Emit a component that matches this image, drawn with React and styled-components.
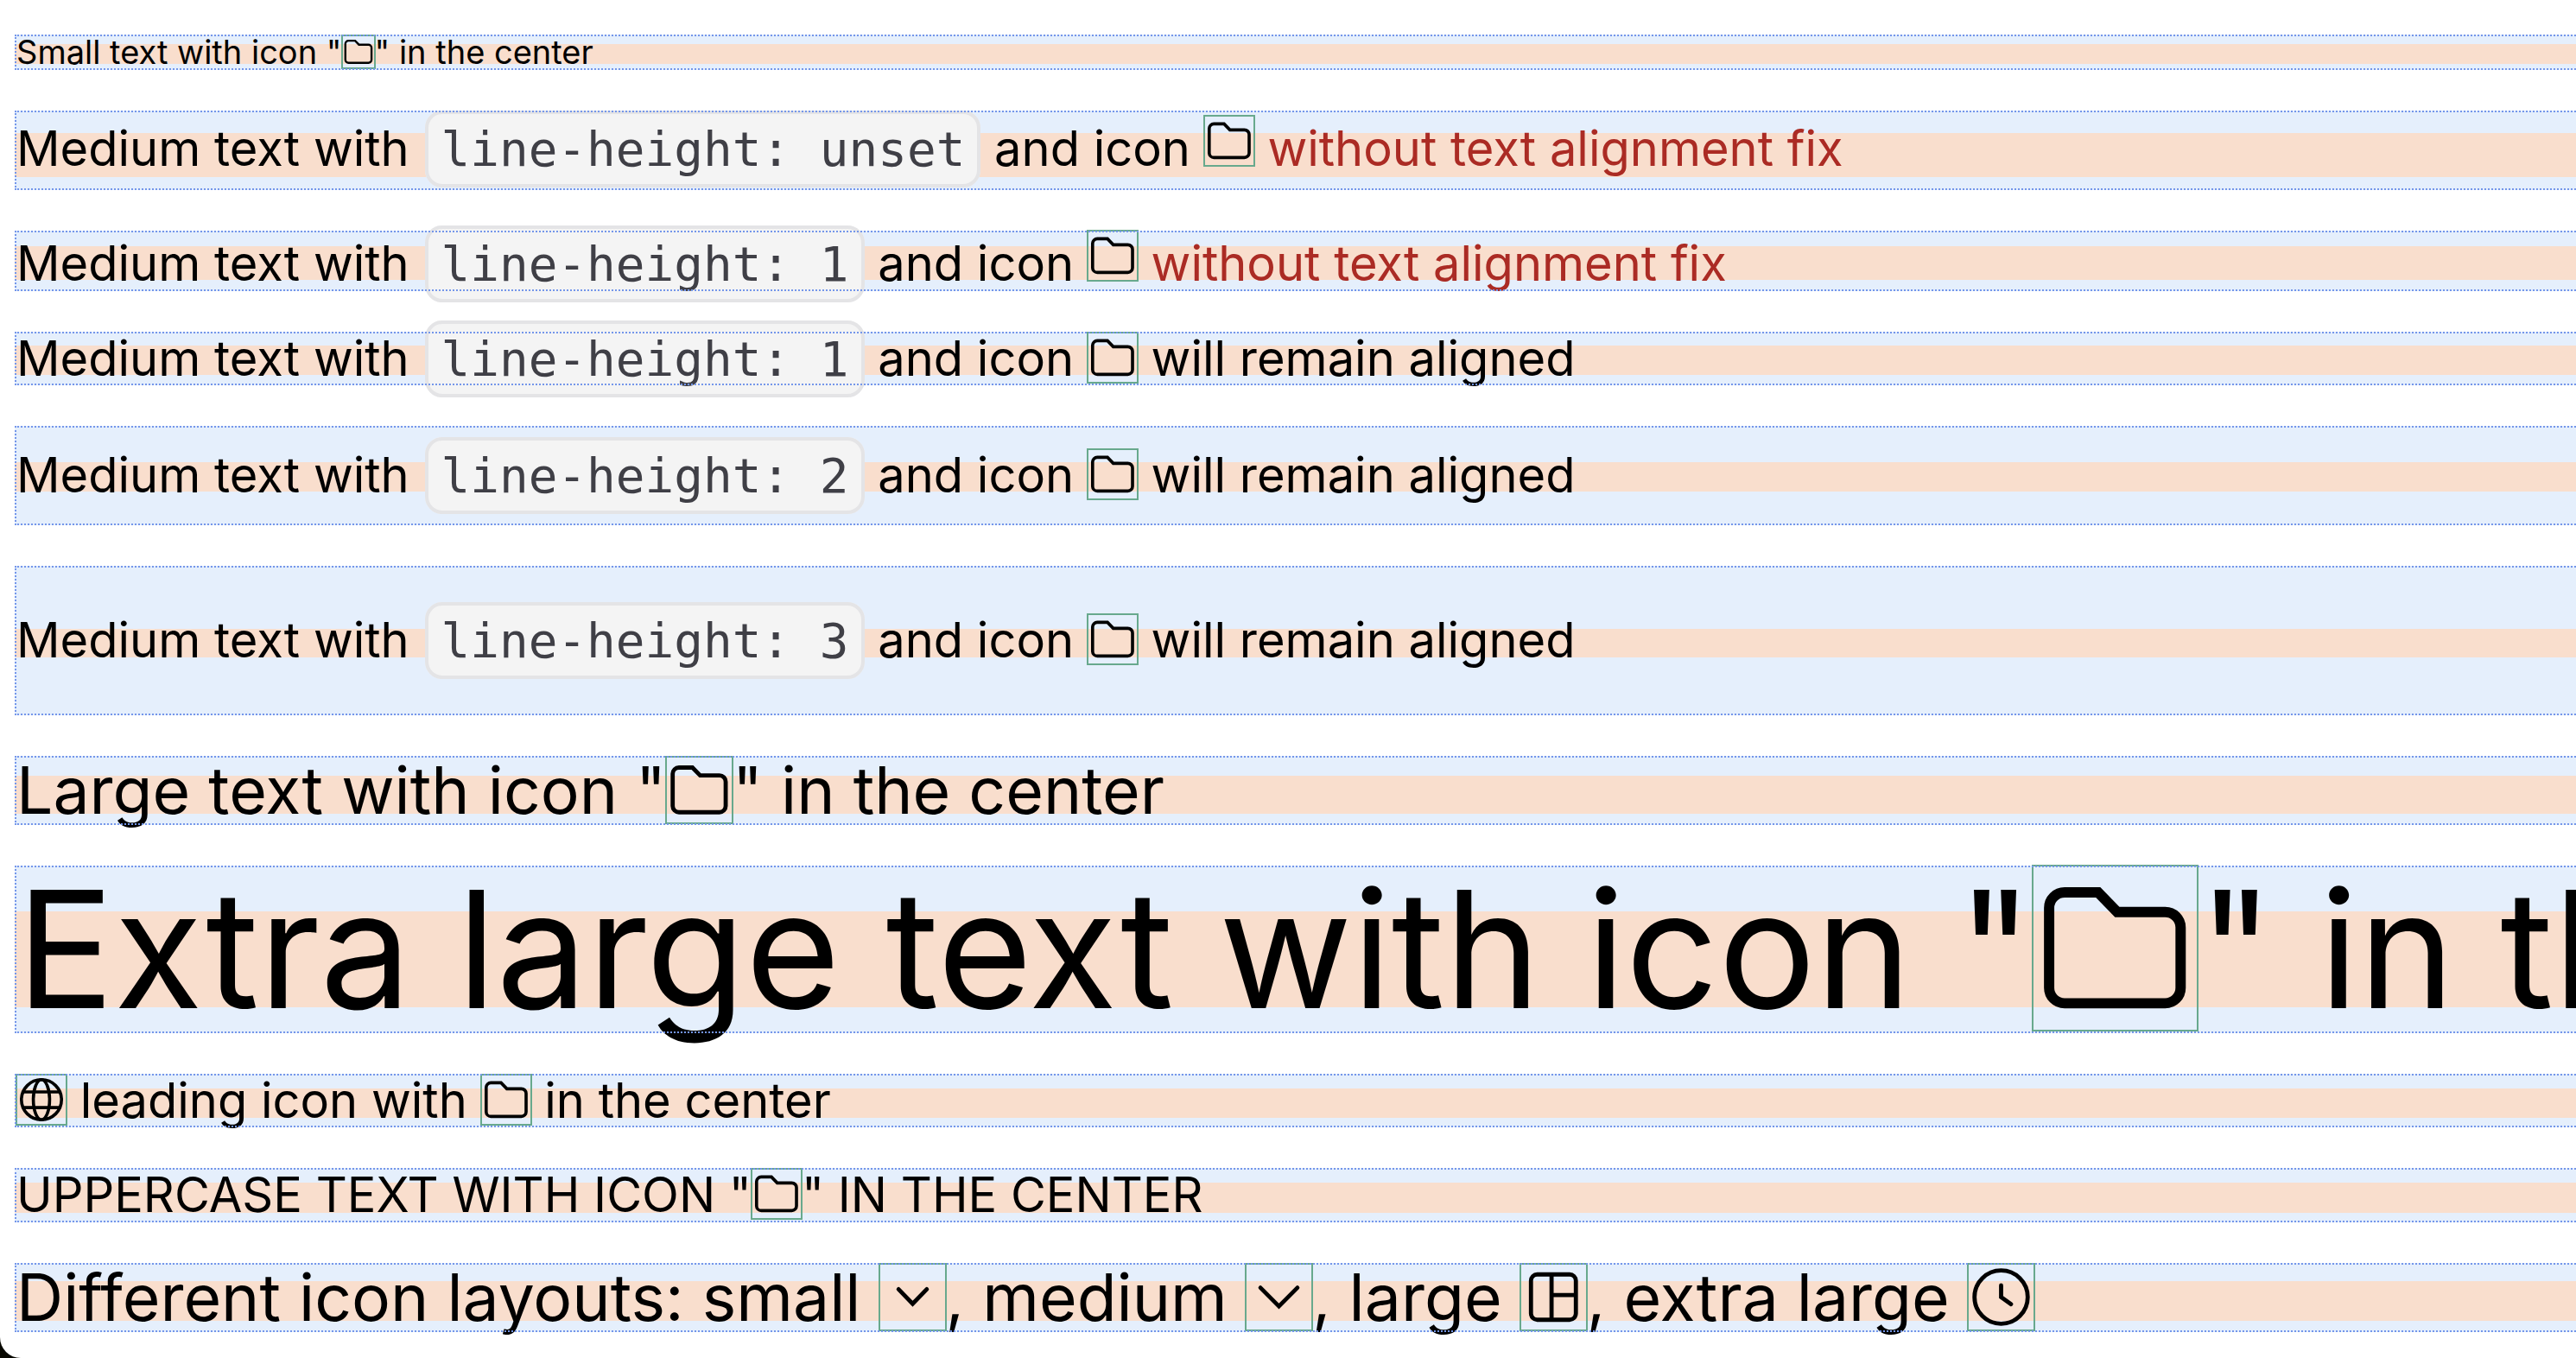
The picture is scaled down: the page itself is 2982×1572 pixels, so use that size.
import React from "react";
import styled, { createGlobalStyle, css } from "styled-components";

const GlobalStyle = createGlobalStyle`
  html {
    background: #080800;
  }
  body {
    margin: 0;
    font-family: Inter, "Liberation Sans", sans-serif;
    color: #000;
  }
`;

const Page = styled.main`
  box-sizing: border-box;
  min-height: 100vh;
  padding: 40px 0 24px 17px;
  display: flex;
  flex-direction: column;
  gap: 47px;
  overflow: hidden;
  background: #fff;
  border-bottom-left-radius: 24px;
`;

const sizes = { small: 38, medium: 56, large: 75, huge: 188 };
const iconSizes = { small: 38, medium: 58, large: 77, huge: 191 };

const Line = styled.p`
  --icon: ${(p) => iconSizes[p.$size]}px;
  margin: 0 -8px 0 0;
  padding: 0 0 ${(p) => p.$below || 0}px 2px;
  white-space: nowrap;
  font-size: ${(p) => sizes[p.$size]}px;
  line-height: ${(p) => p.$leading}px;
  background: linear-gradient(
    #e5effc ${(p) => p.$band[0]}px,
    #f9decd ${(p) => p.$band[0]}px ${(p) => p.$band[1]}px,
    #e5effc ${(p) => p.$band[1]}px
  );
  outline: 2px dotted #7496ea;
  outline-offset: -2px;
`;

const Code = styled.code`
  margin-left: 3px;
  padding: 8px 14px;
  border: 4px solid #e4e4e6;
  border-radius: 20px;
  background: #f4f4f4;
  color: #3f3f46;
  font-family: "DejaVu Sans Mono", monospace;
  font-size: 56px;
  line-height: 1;
`;

const Warning = styled.span`
  color: #ab2b24;
`;

const Glyph = styled.svg`
  display: inline-block;
  width: var(--icon);
  height: var(--icon);
  fill: none;
  stroke: currentColor;
  stroke-width: 1;
  outline: 2px solid #68a98d;
  outline-offset: -1px;
  ${(p) =>
    !p.$raw &&
    css`
      vertical-align: -0.14em;
    `}
`;

const shapes = {
  folder: (
    <path d="M1.6 4.1a1.5 1.5 0 0 1 1.5-1.5H6.35L8.2 4.5h4.65a1.5 1.5 0 0 1 1.5 1.5v5.85a1.5 1.5 0 0 1-1.5 1.5H3.1a1.5 1.5 0 0 1-1.5-1.5z" />
  ),
  globe: (
    <>
      <circle cx="8" cy="8" r="6.4" />
      <ellipse cx="8" cy="8" rx="2.6" ry="6.4" />
      <path d="M2 5.5h12M2 10.5h12" />
    </>
  ),
  chevronSmall: <path strokeLinecap="round" d="M4.6 6.1 8 9.6l3.4-3.5" />,
  chevron: <path strokeLinecap="round" d="M3.55 5.75 8 10.2l4.45-4.45" />,
  layout: (
    <>
      <rect x="2.55" y="2.55" width="10.8" height="10.9" rx="1.5" />
      <path d="M7.5 2.5v11M7.5 7.5h6" />
    </>
  ),
  clock: (
    <>
      <circle cx="8" cy="8" r="6.4" />
      <path strokeLinecap="round" d="M8 5.2V8l2.4 1.7" />
    </>
  ),
};

function Icon({ name = "folder", raw = false }) {
  return (
    <Glyph $raw={raw} viewBox="0 0 16 16" aria-hidden="true">
      {shapes[name]}
    </Glyph>
  );
}

export default function App() {
  return (
    <>
      <GlobalStyle />
      <Page>
        <Line $size="small" $leading={41} $band={[11, 34]}>
          Small text with icon "<Icon />" in the center
        </Line>
        <Line $size="medium" $leading={88} $below={4} $band={[26, 77]}>
          Medium text with <Code>line-height: unset</Code> and icon{" "}
          <Icon raw /> <Warning>without text alignment fix</Warning>
        </Line>
        <Line $size="medium" $leading={64} $band={[18, 57]}>
          Medium text with <Code>line-height: 1</Code> and icon <Icon raw />{" "}
          <Warning>without text alignment fix</Warning>
        </Line>
        <Line $size="medium" $leading={62} $band={[16, 50]}>
          Medium text with <Code>line-height: 1</Code> and icon <Icon /> will
          remain aligned
        </Line>
        <Line $size="medium" $leading={115} $band={[42, 76]}>
          Medium text with <Code>line-height: 2</Code> and icon <Icon /> will
          remain aligned
        </Line>
        <Line $size="medium" $leading={173} $band={[73, 106]}>
          Medium text with <Code>line-height: 3</Code> and icon <Icon /> will
          remain aligned
        </Line>
        <Line $size="large" $leading={80} $band={[23, 67]}>
          Large text with icon "<Icon />" in the center
        </Line>
        <Line $size="huge" $leading={194} $band={[53, 164]}>
          Extra large text with icon "<Icon />" in the center
        </Line>
        <Line $size="medium" $leading={62} $band={[17, 51]}>
          <Icon name="globe" /> leading icon with <Icon /> in the center
        </Line>
        <Line $size="medium" $leading={63} $band={[17, 52]}>
          UPPERCASE TEXT WITH ICON "<Icon />" IN THE CENTER
        </Line>
        <Line $size="large" $leading={80} $band={[21, 67]}>
          Different icon layouts: small <Icon name="chevronSmall" />, medium{" "}
          <Icon name="chevron" />, large <Icon name="layout" />, extra large{" "}
          <Icon name="clock" />
        </Line>
      </Page>
    </>
  );
}
